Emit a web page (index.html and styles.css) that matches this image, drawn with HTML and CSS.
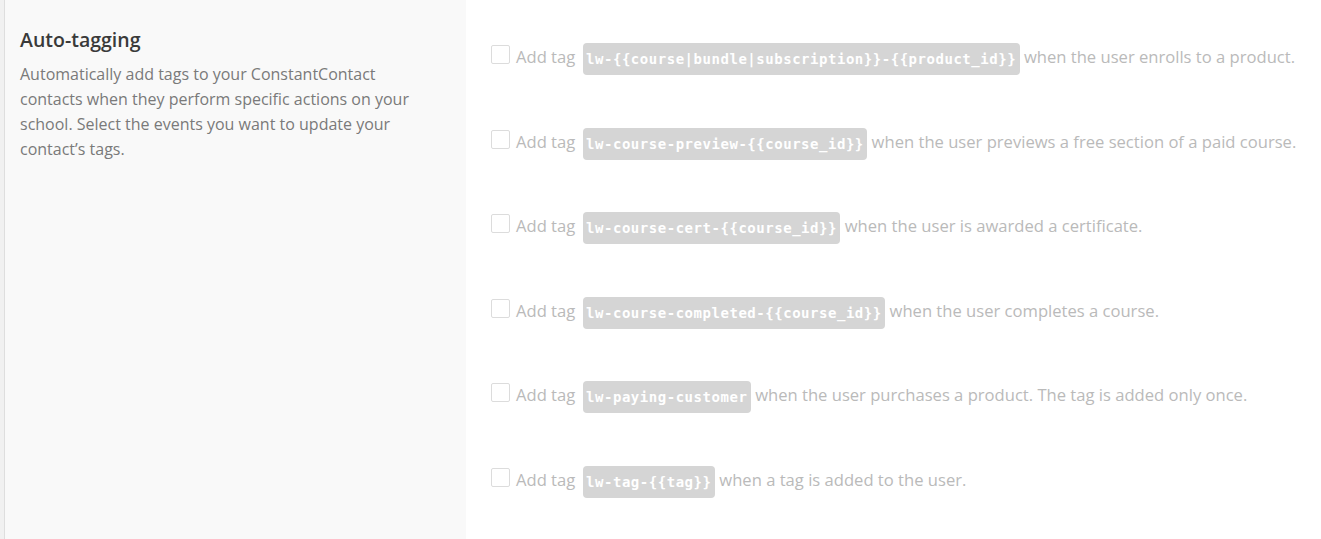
FILE: index.html
```html
<!DOCTYPE html>
<html lang="en">
<head>
<meta charset="utf-8">
<title>Auto-tagging</title>
<link rel="stylesheet" href="styles.css">
</head>
<body>
<div class="page">
  <aside class="side">
    <h2 class="side-title">Auto-tagging</h2>
    <p class="side-desc">Automatically add tags to your ConstantContact contacts when they perform specific actions on your school. Select the events you want to update your contact’s tags.</p>
  </aside>
  <main class="options">
    <label class="row"><span class="box"></span><span class="txt">Add tag <code class="chip">lw-{{course|bundle|subscription}}-{{product_id}}</code> when the user enrolls to a product.</span></label>
    <label class="row"><span class="box"></span><span class="txt">Add tag <code class="chip">lw-course-preview-{{course_id}}</code> when the user previews a free section of a paid course.</span></label>
    <label class="row"><span class="box"></span><span class="txt">Add tag <code class="chip">lw-course-cert-{{course_id}}</code> when the user is awarded a certificate.</span></label>
    <label class="row"><span class="box"></span><span class="txt">Add tag <code class="chip">lw-course-completed-{{course_id}}</code> when the user completes a course.</span></label>
    <label class="row"><span class="box"></span><span class="txt">Add tag <code class="chip">lw-paying-customer</code> when the user purchases a product. The tag is added only once.</span></label>
    <label class="row"><span class="box"></span><span class="txt">Add tag <code class="chip">lw-tag-{{tag}}</code> when a tag is added to the user.</span></label>
  </main>
</div>
</body>
</html>
```

FILE: styles.css
```css
html, body {
  margin: 0;
  padding: 0;
  background: #ffffff;
}
body {
  font-family: "Open Sans", "Liberation Sans", sans-serif;
}
.page {
  display: flex;
  min-height: 539px;
}
.side {
  box-sizing: border-box;
  width: 466px;
  flex: none;
  background: #f9f9f9;
  border-left: 4px solid #f1f1f1;
  box-shadow: inset 1px 0 0 #dedede;
  padding: 27px 26px 0 16px;
}
.side-title {
  margin: 0;
  font-size: 19.5px;
  font-weight: 600;
  color: #3a3a3a;
  line-height: 26px;
}
.side-desc {
  margin: 9px 0 0;
  font-size: 16px;
  line-height: 25px;
  color: #7a7a7a;
}
.options {
  flex: 1;
  padding: 43px 0 0 25px;
  display: flex;
  flex-direction: column;
  gap: 52.5px;
}
.row {
  display: flex;
  align-items: center;
  height: 32px;
  color: #bababa;
  font-size: 16.6px;
}
.box {
  width: 17px;
  height: 17px;
  border: 1px solid #dcdcdc;
  border-radius: 2px;
  background: #fff;
  align-self: flex-start;
  margin-top: 2px;
  margin-right: 6px;
  flex: none;
}
.txt {
  white-space: nowrap;
}
.chip {
  display: inline-block;
  height: 32px;
  line-height: 32px;
  padding: 0 3.5px;
  margin: 0 0 0 3px;
  border-radius: 4px;
  background: #d5d5d5;
  color: #ffffff;
  font-family: "DejaVu Sans Mono", "Liberation Mono", monospace;
  font-weight: bold;
  font-size: 14px;
  letter-spacing: 0.53px;
  vertical-align: middle;
}
```
